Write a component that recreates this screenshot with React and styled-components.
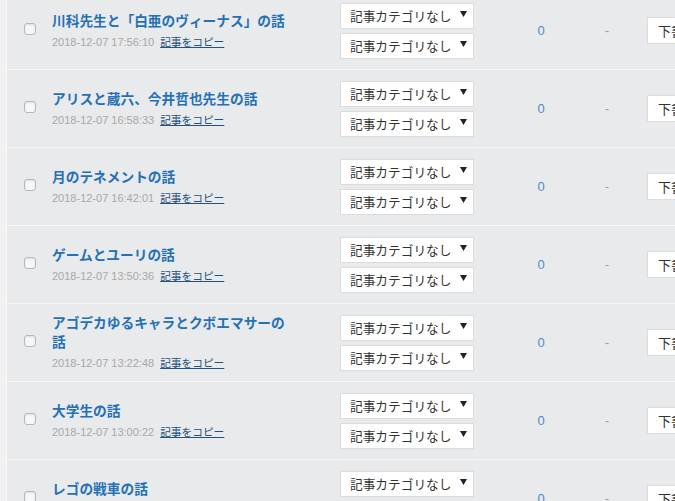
import React from "react";
import styled, { createGlobalStyle } from "styled-components";

const Global = createGlobalStyle`
  html, body { margin: 0; padding: 0; background: #f1f1f1; overflow: hidden; }
  body { font-family: "Liberation Sans", "Noto Sans CJK JP", sans-serif; }
`;

const Page = styled.div`
  padding-left: 6px;
  margin-top: -8px;
  width: 900px;
`;

const List = styled.div`
  border-left: 1px solid #f7f7f7;
  background: #e9eaeb;
`;

const Row = styled.div`
  display: flex;
  align-items: center;
  height: 77px;
  border-bottom: 1px solid #f6f6f6;
  padding-left: 17px;
`;

const CheckCell = styled.div`
  width: 28px;
  display: flex;
  align-items: center;
`;

const Check = styled.input.attrs({ type: "checkbox" })`
  appearance: none;
  margin: 0;
  width: 12px;
  height: 12px;
  border: 1px solid #b4b9be;
  border-radius: 3px;
  background: #f7f7f7;
  box-shadow: inset 0 1px 2px rgba(0, 0, 0, 0.1);
  margin-top: -3px;
`;

const TitleCell = styled.div`
  width: 288px;
  display: flex;
  flex-direction: column;
`;

const Title = styled.a`
  width: 240px;
  font-family: "Liberation Sans", "Noto Sans CJK JP", sans-serif;
  font-size: 13.7px;
  font-weight: 700;
  line-height: 19px;
  color: #2571b6;
  text-decoration: none;
`;

const Meta = styled.div`
  margin-top: 3px;
  display: flex;
  gap: 6px;
  font-size: 11px;
  line-height: 16px;
`;

const Date = styled.span`
  color: #a8a8a8;
`;

const CopyLink = styled.a`
  color: #24527c;
  font-size: 10.7px;
  text-decoration: underline;
`;

const SelectStack = styled.div`
  width: 134px;
  display: flex;
  flex-direction: column;
  gap: 4px;
`;

const Select = styled.div`
  box-sizing: border-box;
  height: 26px;
  background: #fff;
  border: 1px solid #dcdcde;
  display: flex;
  align-items: center;
  justify-content: space-between;
  padding: 0 6px 0 9px;
  font-size: 12.7px;
  color: #333;
`;

const Arrow = styled.svg`
  width: 7px;
  height: 6px;
  margin-top: -4px;
`;

const Count = styled.div`
  width: 100px;
  margin-left: 17px;
  text-align: center;
  font-size: 13px;
  color: #4d8ad0;
`;

const Dash = styled.div`
  width: 32px;
  text-align: center;
  font-size: 13px;
  color: #a0a0a0;
`;

const StatusButton = styled.div`
  margin-left: 24px;
  box-sizing: border-box;
  height: 27px;
  display: flex;
  align-items: center;
  padding: 0 10px;
  background: #fff;
  border: 1px solid #dcdcde;
  font-size: 13px;
  color: #333;
`;

const rows = [
  { title: "川科先生と「白亜のヴィーナス」の話", date: "2018-12-07 17:56:10" },
  { title: "アリスと蔵六、今井哲也先生の話", date: "2018-12-07 16:58:33" },
  { title: "月のテネメントの話", date: "2018-12-07 16:42:01" },
  { title: "ゲームとユーリの話", date: "2018-12-07 13:50:36" },
  { title: "アゴデカゆるキャラとクボエマサーの話", date: "2018-12-07 13:22:48" },
  { title: "大学生の話", date: "2018-12-07 13:00:22" },
  { title: "レゴの戦車の話", date: "2018-12-07 12:41:15" },
];

function CategorySelect() {
  return (
    <Select>
      <span>記事カテゴリなし</span>
      <Arrow viewBox="0 0 7 6">
        <path d="M0 0 H7 L3.5 6 Z" fill="#222" />
      </Arrow>
    </Select>
  );
}

export default function App() {
  return (
    <>
      <Global />
      <Page>
        <List>
          {rows.map((r, i) => (
            <Row key={i}>
              <CheckCell>
                <Check />
              </CheckCell>
              <TitleCell>
                <Title href="#">{r.title}</Title>
                <Meta>
                  <Date>{r.date}</Date>
                  <CopyLink href="#">記事をコピー</CopyLink>
                </Meta>
              </TitleCell>
              <SelectStack>
                <CategorySelect />
                <CategorySelect />
              </SelectStack>
              <Count>0</Count>
              <Dash>-</Dash>
              <StatusButton>下書き</StatusButton>
            </Row>
          ))}
        </List>
      </Page>
    </>
  );
}
